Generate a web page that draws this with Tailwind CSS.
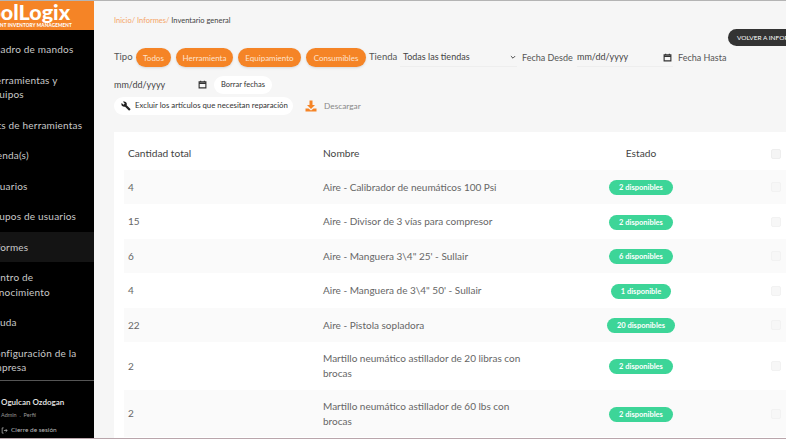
<!DOCTYPE html>
<html lang="es">
<head>
    <meta charset="UTF-8">
    <meta name="viewport" content="width=device-width, initial-scale=1.0">
    <title>Inventario general | ToolLogix</title>
    <script src="https://cdn.jsdelivr.net/npm/@tailwindcss/browser@4"></script>
</head>
<body class="h-[439px] w-[786px] overflow-hidden border-t border-b border-t-[#b4b4b4] border-b-[#b9a5ab] bg-[#f6f6f6] font-['Lato',sans-serif] antialiased">
    <div class="flex h-[437px] w-[960px] -ml-[26px]">
        <!-- Sidebar -->
        <aside class="flex h-full w-[120px] shrink-0 flex-col bg-black text-[#c9c9c9]">
            <div class="h-[29px] shrink-0 overflow-hidden bg-[#f58426] pl-[4px] text-white">
                <div class="h-[20px] text-[21.5px] font-black leading-[23px] whitespace-nowrap">ToolLogix</div>
                <div class="w-[92px] text-right text-[4.6px] font-black leading-[8px] tracking-[0.15px] whitespace-nowrap">EQUIPMENT INVENTORY MANAGEMENT</div>
            </div>
            <nav class="flex flex-col pt-[4px] pl-[14px] text-[10px] leading-[14.5px] tracking-[0.2px]">
                <a class="block py-[8px]">Cuadro de mandos</a>
                <a class="block py-[8px]">Herramientas y<br>equipos</a>
                <a class="block py-[8px]">Kits de herramientas</a>
                <a class="block py-[8px]">Tienda(s)</a>
                <a class="block py-[8px]">Usuarios</a>
                <a class="block py-[8px]">Grupos de usuarios</a>
                <a class="-ml-[14px] block bg-[#141414] py-[8px] pl-[14px]">Informes</a>
                <a class="block py-[8px]">Centro de<br>conocimiento</a>
                <a class="block py-[8px]">Ayuda</a>
                <a class="block pt-[8px] pb-[4px]">Configuración de la<br>empresa</a>
            </nav>
            <div class="mt-auto border-t border-[#555] pl-[27px] pt-[15px] pb-[3px]">
                <div class="text-[8px] font-bold leading-[12px] text-[#ddd]">Ogulcan Ozdogan</div>
                <div class="mt-[2px] text-[5.5px] leading-[10px] text-[#999]">Admin &nbsp;.&nbsp; Perfil</div>
                <div class="mt-[5px] flex items-center gap-[3px] text-[6.5px] leading-[10px] text-[#bbb]">
                    <svg class="h-[7px] w-[7px]" viewBox="0 0 24 24" fill="none" stroke="currentColor" stroke-width="2.5"><path d="M9 3H4v18h5M10 12h11M16 7l5 5-5 5"/></svg>
                    Cierre de sesión
                </div>
            </div>
        </aside>

        <!-- Main -->
        <main class="min-w-0 flex-1 pl-[20px] text-[#555]">
            <div class="flex h-[47px] w-[720px] items-start justify-between">
                <p class="mt-[15px] text-[7.5px] leading-[10px]"><span class="text-[#f5a566]">Inicio/ Informes/</span> <span class="text-[#444]">Inventario general</span></p>
                <button class="mt-[28px] h-[17px] w-[106px] rounded-full bg-[#333] pl-[9px] text-left text-[6.5px] whitespace-nowrap text-white">VOLVER A INFORMES</button>
            </div>

            <!-- Filters -->
            <div class="flex h-[19px] items-center text-[9px]">
                <span class="w-[22px] text-[9.5px]">Tipo</span>
                <div class="flex gap-[5px]">
                    <button class="h-[19px] w-[35px] rounded-full bg-[#f58426] text-[8px] text-[#fde3cf] shadow-sm">Todos</button>
                    <button class="h-[19px] w-[57px] rounded-full bg-[#f58426] text-[8px] text-[#fde3cf] shadow-sm">Herramienta</button>
                    <button class="h-[19px] w-[63px] rounded-full bg-[#f58426] text-[8px] text-[#fde3cf] shadow-sm">Equipamiento</button>
                    <button class="h-[19px] w-[60px] rounded-full bg-[#f58426] text-[8px] text-[#fde3cf] shadow-sm">Consumibles</button>
                </div>
                <span class="ml-[3px] mr-[2px] w-[29px] text-[9.5px]">Tienda</span>
                <div class="flex h-[19px] w-[117px] items-center justify-between border-b border-[#eee] pl-[3px] pr-[1px] text-[#444]">
                    <span>Todas las tiendas</span>
                    <svg class="h-[6px] w-[6px]" viewBox="0 0 10 10" fill="none" stroke="#444" stroke-width="1.6"><path d="M1.5 3.5 5 7l3.5-3.5"/></svg>
                </div>
                <span class="ml-[5px] mr-[4px] w-[51px] whitespace-nowrap">Fecha Desde</span>
                <div class="flex h-[19px] w-[96px] items-center justify-between border-b border-[#eee] pr-[1px] text-[#444]">
                    <span>mm/dd/yyyy</span>
                    <svg class="h-[9px] w-[9px]" viewBox="0 0 24 24" fill="none" stroke="#333" stroke-width="3"><path d="M3 5h18v16H3zM3 9h18" /><path d="M7 2v3M17 2v3" /></svg>
                </div>
                <span class="ml-[5px] whitespace-nowrap">Fecha Hasta</span>
            </div>

            <div class="mt-[8px] flex h-[19px] items-center gap-[6px] text-[9px]">
                <div class="flex w-[94px] items-center justify-between pr-[1px] text-[#444]">
                    <span>mm/dd/yyyy</span>
                    <svg class="h-[9px] w-[9px]" viewBox="0 0 24 24" fill="none" stroke="#333" stroke-width="3"><path d="M3 5h18v16H3zM3 9h18" /><path d="M7 2v3M17 2v3" /></svg>
                </div>
                <button class="h-[18px] w-[58px] rounded-full bg-white text-[7.5px] text-[#333]">Borrar fechas</button>
            </div>

            <div class="mt-[3px] flex h-[18px] items-center">
                <button class="flex h-[18px] w-[179px] items-center gap-[4px] rounded-full bg-white pl-[7px] text-[7.8px] whitespace-nowrap text-[#333]">
                    <svg class="h-[10px] w-[10px]" viewBox="0 0 24 24" fill="#222"><path d="M22.7 19l-9.1-9.1c.9-2.3.4-5-1.5-6.9-2-2-5-2.4-7.4-1.3L9 6 6 9 1.6 4.7C.4 7.1.9 10.1 2.9 12.1c1.9 1.9 4.6 2.4 6.9 1.5l9.1 9.1c.4.4 1 .4 1.4 0l2.3-2.3c.5-.4.5-1.1.1-1.4z"/></svg>
                    Excluir los artículos que necesitan reparación
                </button>
                <svg class="ml-[12px] h-[12px] w-[12px]" viewBox="0 0 24 24" fill="#f58426"><path d="M9 1h6v9h5l-8 8-8-8h5z"/><path d="M1 17h6l5 4 5-4h6v6H1z"/></svg>
                <span class="ml-[7px] text-[8.3px] text-[#888]">Descargar</span>
            </div>

            <!-- Inventory table -->
            <section class="mt-[17px] h-[306px] w-[687px] bg-white pl-[10px] text-[10px] text-[#666]">
                <div class="grid h-[38px] grid-cols-[195px_270px_1fr_30px] items-center pl-[4px] pt-[6px] text-[10.2px] text-[#444]">
                    <span>Cantidad total</span>
                    <span>Nombre</span>
                    <span class="w-[96px] text-center">Estado</span>
                    <span class="h-[10px] w-[10px] rounded-[2px] border border-[#eee] bg-[#f5f5f5]"></span>
                </div>

                <div class="grid h-[34px] grid-cols-[195px_270px_1fr_30px] items-center bg-[#fafafa] pl-[4px]">
                    <span>4</span><span>Aire - Calibrador de neumáticos 100 Psi</span>
                    <span class="w-[96px] text-center"><i class="inline-block rounded-full bg-[#3dd598] px-[10px] text-[7.5px] leading-[15px] font-bold not-italic text-white">2 disponibles</i></span>
                    <span class="h-[10px] w-[10px] rounded-[2px] border border-[#f2f2f2] bg-[#f7f7f7]"></span>
                </div>
                <div class="grid h-[35px] grid-cols-[195px_270px_1fr_30px] items-center pl-[4px]">
                    <span>15</span><span>Aire - Divisor de 3 vías para compresor</span>
                    <span class="w-[96px] text-center"><i class="inline-block rounded-full bg-[#3dd598] px-[10px] text-[7.5px] leading-[15px] font-bold not-italic text-white">2 disponibles</i></span>
                    <span class="h-[10px] w-[10px] rounded-[2px] border border-[#f2f2f2] bg-[#f7f7f7]"></span>
                </div>
                <div class="grid h-[34px] grid-cols-[195px_270px_1fr_30px] items-center bg-[#fafafa] pl-[4px]">
                    <span>6</span><span>Aire - Manguera 3\4" 25' - Sullair</span>
                    <span class="w-[96px] text-center"><i class="inline-block rounded-full bg-[#3dd598] px-[10px] text-[7.5px] leading-[15px] font-bold not-italic text-white">6 disponibles</i></span>
                    <span class="h-[10px] w-[10px] rounded-[2px] border border-[#f2f2f2] bg-[#f7f7f7]"></span>
                </div>
                <div class="grid h-[35px] grid-cols-[195px_270px_1fr_30px] items-center pl-[4px]">
                    <span>4</span><span>Aire - Manguera de 3\4" 50' - Sullair</span>
                    <span class="w-[96px] text-center"><i class="inline-block rounded-full bg-[#3dd598] px-[10px] text-[7.5px] leading-[15px] font-bold not-italic text-white">1 disponible</i></span>
                    <span class="h-[10px] w-[10px] rounded-[2px] border border-[#f2f2f2] bg-[#f7f7f7]"></span>
                </div>
                <div class="grid h-[34px] grid-cols-[195px_270px_1fr_30px] items-center bg-[#fafafa] pl-[4px]">
                    <span>22</span><span>Aire - Pistola sopladora</span>
                    <span class="w-[96px] text-center"><i class="inline-block rounded-full bg-[#3dd598] px-[10px] text-[7.5px] leading-[15px] font-bold not-italic text-white">20 disponibles</i></span>
                    <span class="h-[10px] w-[10px] rounded-[2px] border border-[#f2f2f2] bg-[#f7f7f7]"></span>
                </div>
                <div class="grid h-[48px] grid-cols-[195px_270px_1fr_30px] items-center pl-[4px] leading-[15px]">
                    <span>2</span><span class="w-[200px]">Martillo neumático astillador de 20 libras con brocas</span>
                    <span class="w-[96px] text-center"><i class="inline-block rounded-full bg-[#3dd598] px-[10px] text-[7.5px] leading-[15px] font-bold not-italic text-white">2 disponibles</i></span>
                    <span class="h-[10px] w-[10px] rounded-[2px] border border-[#f2f2f2] bg-[#f7f7f7]"></span>
                </div>
                <div class="grid h-[47px] grid-cols-[195px_270px_1fr_30px] items-center bg-[#fafafa] pl-[4px] leading-[15px]">
                    <span>2</span><span class="w-[200px]">Martillo neumático astillador de 60 lbs con brocas</span>
                    <span class="w-[96px] text-center"><i class="inline-block rounded-full bg-[#3dd598] px-[10px] text-[7.5px] leading-[15px] font-bold not-italic text-white">2 disponibles</i></span>
                    <span class="h-[10px] w-[10px] rounded-[2px] border border-[#f2f2f2] bg-[#f7f7f7]"></span>
                </div>
            </section>
        </main>
    </div>
</body>
</html>
